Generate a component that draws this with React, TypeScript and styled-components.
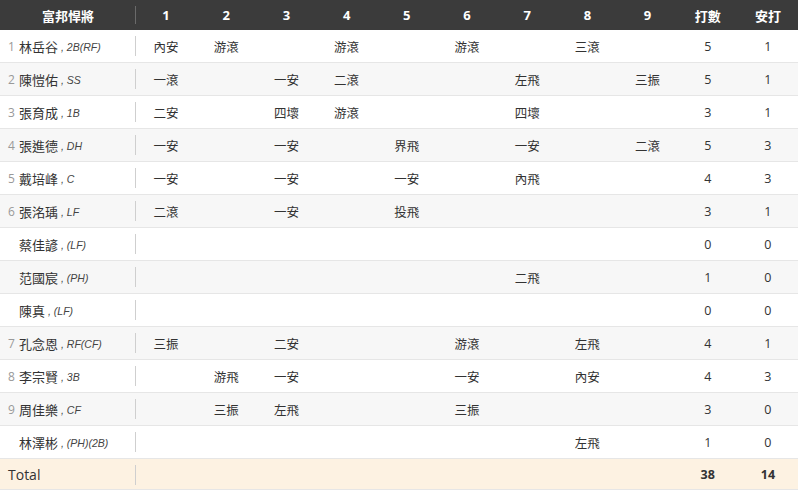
import React from "react";
import styled, { createGlobalStyle } from "styled-components";

const Global = createGlobalStyle`
  html, body { margin: 0; padding: 0; background: #fff; }
  body { font-family: "Open Sans", "Noto Sans CJK TC", sans-serif; color: #333; }
`;

const Table = styled.div`
  width: 798px;
  display: grid;
  grid-template-columns: 136px repeat(11, 1fr);
`;

const Row = styled.div<{ $bg: string; $h: number }>`
  display: contents;
  & > div {
    background: ${(p) => p.$bg};
    height: ${(p) => p.$h}px;
  }
`;

const HeadCell = styled.div<{ $first?: boolean }>`
  position: relative;
  background: #3b3b3b !important;
  color: #fff;
  font-weight: 700;
  font-size: 13px;
  display: flex;
  align-items: center;
  justify-content: center;
  height: 30px;
  ${(p) =>
    p.$first &&
    `&::after { content: ""; position: absolute; right: 0; top: 6px; height: 18px; width: 1px; background: #6a6a6a; }`}
`;

const Cell = styled.div<{ $bold?: boolean }>`
  display: flex;
  align-items: center;
  justify-content: center;
  font-size: 12.5px;
  font-weight: ${(p) => (p.$bold ? 700 : 400)};
  border-bottom: 1px solid #e6e6e6;
  box-sizing: border-box;
  color: #333;
`;

const NameCell = styled.div`
  position: relative;
  display: flex;
  align-items: center;
  padding-left: 8px;
  font-size: 13px;
  border-bottom: 1px solid #e6e6e6;
  box-sizing: border-box;
  &::after {
    content: "";
    position: absolute;
    right: 0;
    top: 6px;
    height: 20px;
    width: 1px;
    background: #cfcfcf;
  }
`;

const Order = styled.span`
  display: inline-block;
  width: 11px;
  color: #999;
  font-size: 12px;
`;

const Name = styled.span`
  color: #333;
`;

const Pos = styled.span`
  font-family: "Liberation Sans", "Noto Sans CJK TC", sans-serif;
  font-style: italic;
  font-size: 10.5px;
  color: #444;
  margin-left: 3px;
  padding-top: 2px;
`;

const TotalLabel = styled.span`
  font-size: 14px;
  color: #333;
`;

type P = { n?: number; name: string; pos: string; r: (string | null)[]; ab: number; h: number };
const _ = null;
const players: P[] = [
  { n: 1, name: "林岳谷", pos: "2B(RF)", r: ["內安", "游滾", _, "游滾", _, "游滾", _, "三滾", _], ab: 5, h: 1 },
  { n: 2, name: "陳愷佑", pos: "SS", r: ["一滾", _, "一安", "二滾", _, _, "左飛", _, "三振"], ab: 5, h: 1 },
  { n: 3, name: "張育成", pos: "1B", r: ["二安", _, "四壞", "游滾", _, _, "四壞", _, _], ab: 3, h: 1 },
  { n: 4, name: "張進德", pos: "DH", r: ["一安", _, "一安", _, "界飛", _, "一安", _, "二滾"], ab: 5, h: 3 },
  { n: 5, name: "戴培峰", pos: "C", r: ["一安", _, "一安", _, "一安", _, "內飛", _, _], ab: 4, h: 3 },
  { n: 6, name: "張洺瑀", pos: "LF", r: ["二滾", _, "一安", _, "投飛", _, _, _, _], ab: 3, h: 1 },
  { name: "蔡佳諺", pos: "(LF)", r: [_, _, _, _, _, _, _, _, _], ab: 0, h: 0 },
  { name: "范國宸", pos: "(PH)", r: [_, _, _, _, _, _, "二飛", _, _], ab: 1, h: 0 },
  { name: "陳真", pos: "(LF)", r: [_, _, _, _, _, _, _, _, _], ab: 0, h: 0 },
  { n: 7, name: "孔念恩", pos: "RF(CF)", r: ["三振", _, "二安", _, _, "游滾", _, "左飛", _], ab: 4, h: 1 },
  { n: 8, name: "李宗賢", pos: "3B", r: [_, "游飛", "一安", _, _, "一安", _, "內安", _], ab: 4, h: 3 },
  { n: 9, name: "周佳樂", pos: "CF", r: [_, "三振", "左飛", _, _, "三振", _, _, _], ab: 3, h: 0 },
  { name: "林澤彬", pos: "(PH)(2B)", r: [_, _, _, _, _, _, _, "左飛", _], ab: 1, h: 0 },
];

const headers = ["1", "2", "3", "4", "5", "6", "7", "8", "9", "打數", "安打"];

export default function App() {
  return (
    <>
      <Global />
      <Table>
        <Row $bg="#3b3b3b" $h={30}>
          <HeadCell $first>富邦悍將</HeadCell>
          {headers.map((h) => (
            <HeadCell key={h}>{h}</HeadCell>
          ))}
        </Row>
        {players.map((p, i) => (
          <Row key={p.name} $bg={i % 2 === 0 ? "#ffffff" : "#f7f7f7"} $h={33}>
            <NameCell>
              <Order>{p.n ?? ""}</Order>
              <Name>{p.name}</Name>
              <Pos>, {p.pos}</Pos>
            </NameCell>
            {p.r.map((v, j) => (
              <Cell key={j}>{v ?? ""}</Cell>
            ))}
            <Cell>{p.ab}</Cell>
            <Cell>{p.h}</Cell>
          </Row>
        ))}
        <Row $bg="#fdf2e2" $h={31}>
          <NameCell>
            <TotalLabel>Total</TotalLabel>
          </NameCell>
          {Array.from({ length: 9 }).map((_, j) => (
            <Cell key={j} />
          ))}
          <Cell $bold>38</Cell>
          <Cell $bold>14</Cell>
        </Row>
      </Table>
    </>
  );
}
